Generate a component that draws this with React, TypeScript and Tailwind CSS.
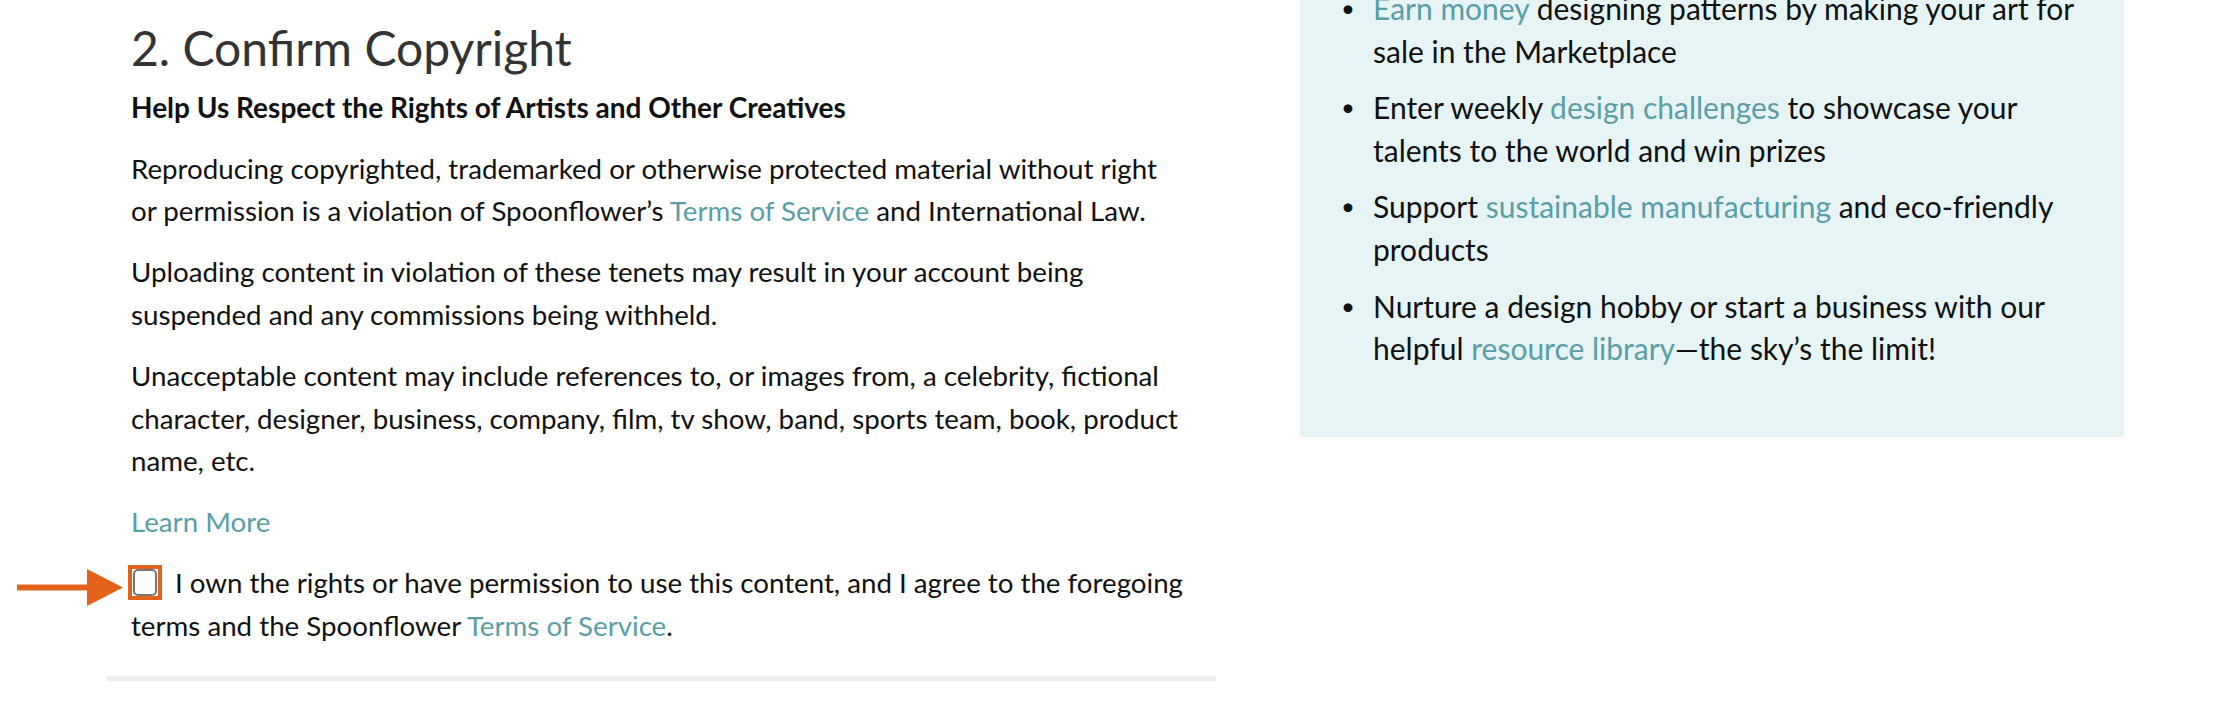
const LINK = 'text-[#5a9ea6]'

function Arrow() {
  return (
    <svg
      className="absolute left-[-115px] top-[-1px] pointer-events-none"
      width="108"
      height="40"
      viewBox="0 0 108 40"
    >
      <rect x="0" y="16.5" width="76" height="6" fill="#e4631b" />
      <polygon points="70,1 106,19.5 70,38" fill="#e4631b" />
    </svg>
  )
}

function Checkbox() {
  return (
    <span className="relative inline-block align-middle top-[-4px] ml-[-3px] mr-[13px] border-[4px] border-[#e4631b] px-[1px] py-[0px]">
      <Arrow />
      <span className="block w-[24px] h-[27px] rounded-[5px] border-2 border-[#767676] bg-white" />
    </span>
  )
}

function CopyrightForm() {
  const p = 'mb-[18.5px] text-[27.7px] leading-[42.6px]'
  return (
    <div className="w-[1109px] shrink-0">
      <div className="pl-[24px] pr-[30px] pt-[20px]">
        <h2 className="text-[48px] leading-[56px] font-normal text-[#333] mb-[10px]">
          2. Confirm Copyright
        </h2>
        <p className="text-[28px] leading-[42.6px] font-bold mb-[19px]">
          Help Us Respect the Rights of Artists and Other Creatives
        </p>
        <p className={p}>
          Reproducing copyrighted, trademarked or otherwise protected material without right or
          permission is a violation of Spoonflower’s <a className={LINK}>Terms of Service</a> and
          International Law.
        </p>
        <p className={p}>
          Uploading content in violation of these tenets may result in your account being suspended
          and any commissions being withheld.
        </p>
        <p className={p}>
          Unacceptable content may include references to, or images from, a celebrity, fictional
          character, designer, business, company, film, tv show, band, sports team, book, product
          name, etc.
        </p>
        <p className={p}>
          <a className={LINK}>Learn More</a>
        </p>
        <label className="block text-[27.7px] leading-[42.6px]">
          <Checkbox />
          I own the rights or have permission to use this content, and I agree to the foregoing
          terms and the Spoonflower <a className={LINK}>Terms of Service</a>.
        </label>
      </div>
      <div className="mt-[28px] h-[5px] bg-[#ececec]" />
    </div>
  )
}

const perks = [
  <>
    <a className={LINK}>Earn money</a> designing patterns by making your art for sale in the
    Marketplace
  </>,
  <>
    Enter weekly <a className={LINK}>design challenges</a> to showcase your talents to the world
    and win prizes
  </>,
  <>
    Support <a className={LINK}>sustainable manufacturing</a> and eco-friendly products
  </>,
  <>
    Nurture a design hobby or start a business with our helpful{' '}
    <a className={LINK}>resource library</a>—the sky’s the limit!
  </>,
]

function PerksPanel() {
  return (
    <div className="w-[824px] shrink-0 bg-[#e6f4f6] mt-[-60px] pt-[47px] pb-[67px] pl-[41px] pr-[39px]">
      <ul className="text-[30px] leading-[42.6px]">
        {perks.map((item, i) => (
          <li key={i} className="flex mb-[14px] last:mb-0">
            <span className="w-[32px] shrink-0 text-[24px]">•</span>
            <span>{item}</span>
          </li>
        ))}
      </ul>
    </div>
  )
}

export default function App() {
  return (
    <div
      className="min-h-[716px] bg-white text-[#111] overflow-hidden"
      style={{ fontFamily: 'Lato, "Open Sans", sans-serif' }}
    >
      <div className="flex items-start pl-[107px] gap-[84px]">
        <CopyrightForm />
        <PerksPanel />
      </div>
    </div>
  )
}
